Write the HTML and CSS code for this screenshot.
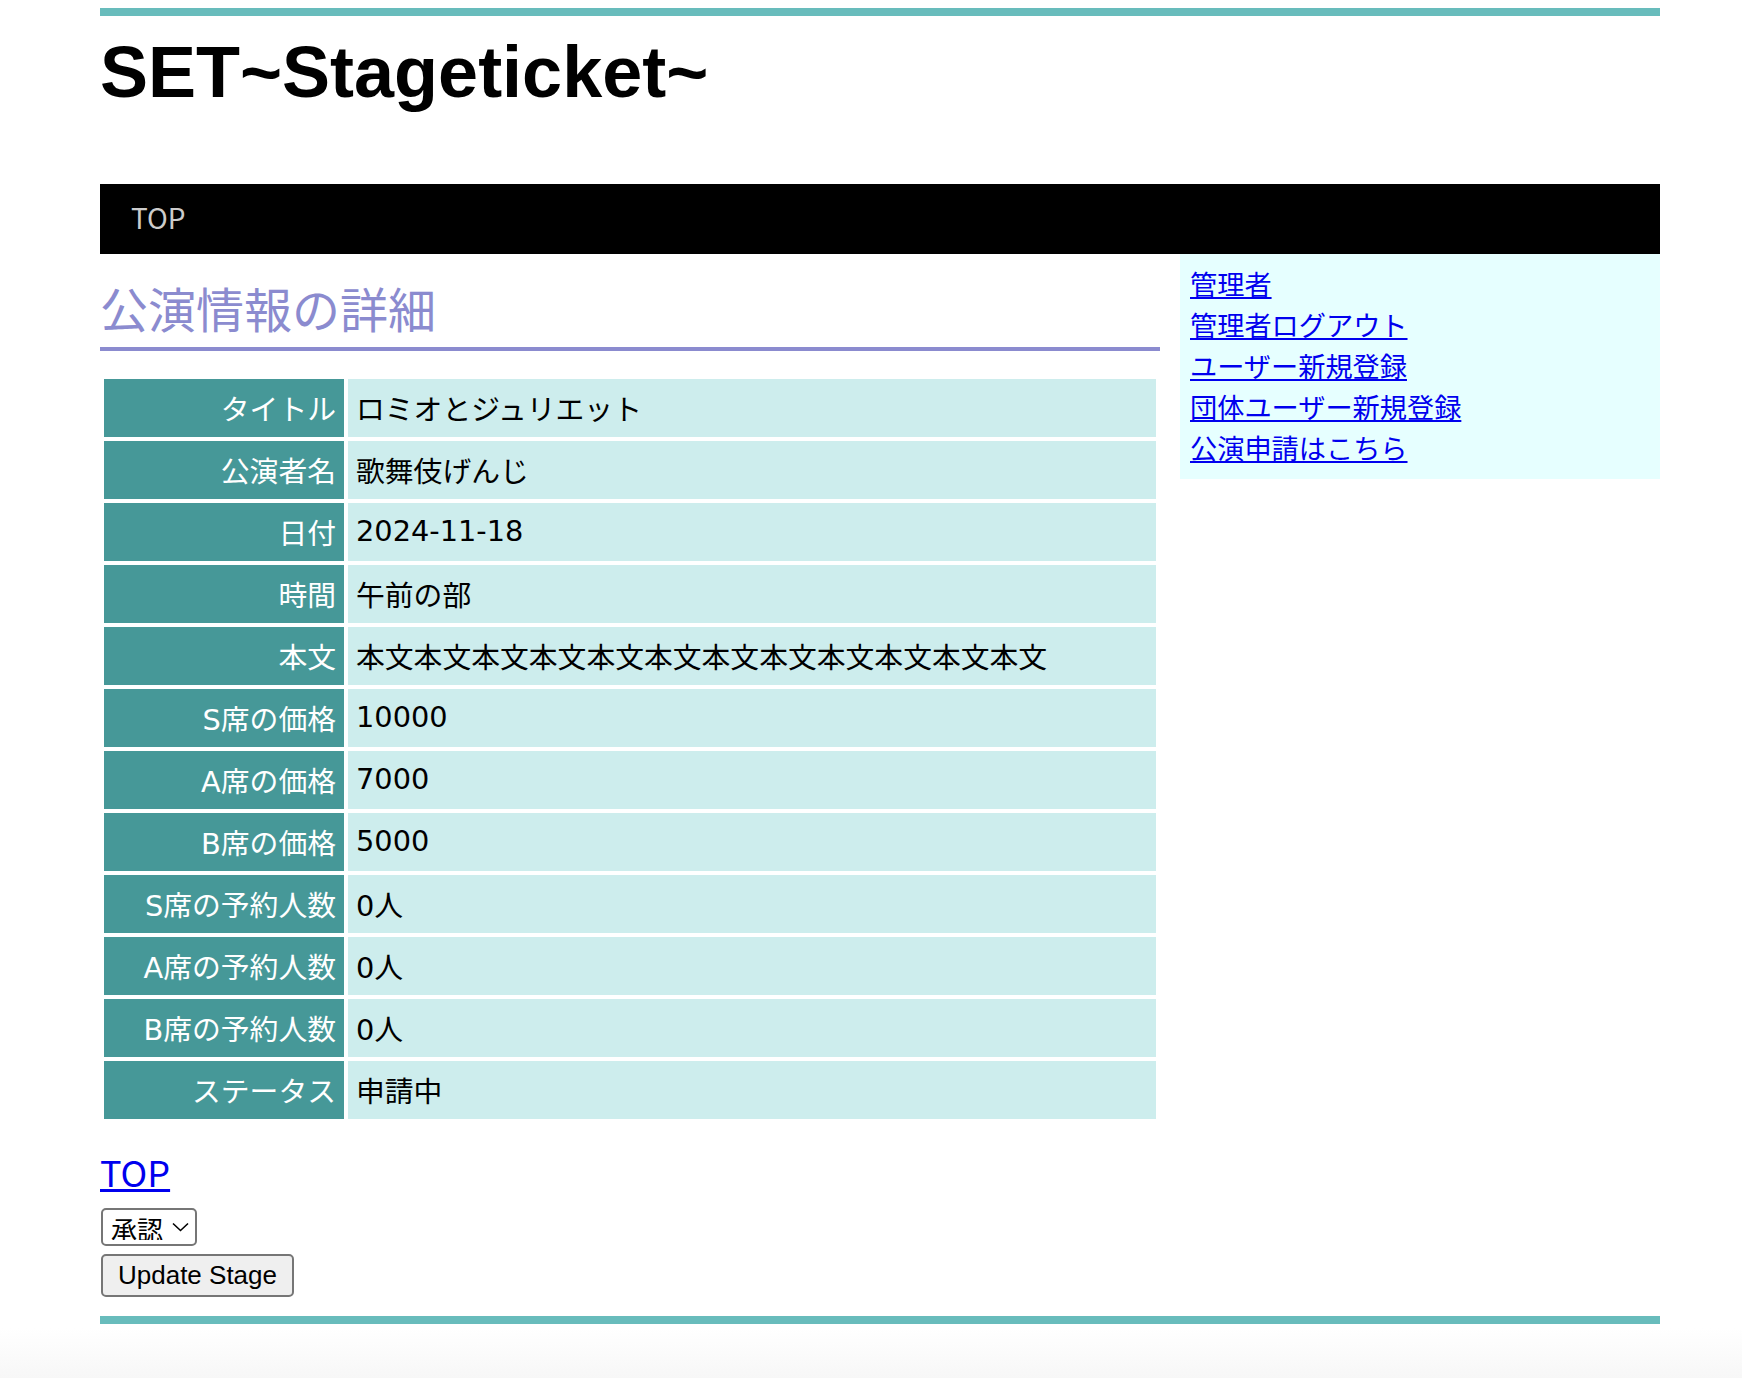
FILE: index.html
```html
<!DOCTYPE html>
<html lang="ja">
<head>
<meta charset="utf-8">
<title>SET~Stageticket~</title>
<link rel="stylesheet" href="styles.css">
</head>
<body>
<div class="wrap">
  <header class="header">
    <h1 class="site-title">SET~Stageticket~</h1>
  </header>
  <nav class="gnav">
    <a class="gnav-link" href="#">TOP</a>
  </nav>
  <div class="columns">
    <main class="main">
      <h2 class="page-title">公演情報の詳細</h2>
      <table class="detail">
        <tr><th>タイトル</th><td>ロミオとジュリエット</td></tr>
        <tr><th>公演者名</th><td>歌舞伎げんじ</td></tr>
        <tr><th>日付</th><td>2024-11-18</td></tr>
        <tr><th>時間</th><td>午前の部</td></tr>
        <tr><th>本文</th><td>本文本文本文本文本文本文本文本文本文本文本文本文</td></tr>
        <tr><th>S席の価格</th><td>10000</td></tr>
        <tr><th>A席の価格</th><td>7000</td></tr>
        <tr><th>B席の価格</th><td>5000</td></tr>
        <tr><th>S席の予約人数</th><td>0人</td></tr>
        <tr><th>A席の予約人数</th><td>0人</td></tr>
        <tr><th>B席の予約人数</th><td>0人</td></tr>
        <tr><th>ステータス</th><td>申請中</td></tr>
      </table>
      <div class="after">
        <a class="top-link" href="#">TOP</a>
        <form class="status-form">
          <span class="select-wrap">
            <select class="status-select">
              <option>承認</option>
              <option>却下</option>
            </select>
            <svg class="chev" width="17" height="10" viewBox="0 0 17 10"><path d="M1 1.5 L8.5 8.5 L16 1.5" fill="none" stroke="#000" stroke-width="1.6"/></svg>
          </span>
          <button class="update-btn" type="button">Update Stage</button>
        </form>
      </div>
    </main>
    <aside class="side">
      <a class="side-link" href="#">管理者</a>
      <a class="side-link" href="#">管理者ログアウト</a>
      <a class="side-link" href="#">ユーザー新規登録</a>
      <a class="side-link" href="#">団体ユーザー新規登録</a>
      <a class="side-link" href="#">公演申請はこちら</a>
    </aside>
  </div>
</div>
</body>
</html>
```

FILE: styles.css
```css
html {
  min-height: 100%;
  background: linear-gradient(to bottom, #ffffff calc(100% - 50px), #f7f7f7 100%);
}
html, body {
  margin: 0;
  padding: 0;
}
body {
  padding: 8px 0 0;
  font-family: "Noto Sans CJK JP", sans-serif;
}
.wrap {
  width: 1560px;
  margin-left: 100px;
  border-top: 8px solid #68bcbc;
  border-bottom: 8px solid #68bcbc;
}
.header {
  height: 168px;
  box-sizing: border-box;
  padding-top: 20px;
}
.site-title {
  margin: 0;
  font-family: "Liberation Sans", Arial, sans-serif;
  font-weight: bold;
  font-size: 72px;
  line-height: 72px;
  color: #000;
}
.gnav {
  background: #000;
  height: 70px;
  padding-left: 31px;
  display: flex;
  align-items: flex-start;
}
.gnav-link {
  color: #cccccc;
  text-decoration: none;
  font-family: "Noto Sans CJK JP", sans-serif;
  font-size: 28px;
  line-height: 66px;
}
.columns {
  display: flex;
  align-items: flex-start;
  gap: 20px;
}
.main {
  width: 1060px;
  flex: none;
}
.page-title {
  margin: 17px 0 24px;
  padding-bottom: 4px;
  border-bottom: 4px solid #8b8bcf;
  color: #8b8bcf;
  font-weight: normal;
  font-size: 48px;
  line-height: 72px;
}
.detail {
  width: 1060px;
  border-spacing: 4px;
  margin: 0;
  font-family: "DejaVu Sans", "Noto Sans CJK JP", sans-serif;
  font-size: 28.8px;
}
.detail th {
  width: 240px;
  box-sizing: border-box;
  height: 58px;
  padding: 0 8px 2px;
  background: #469898;
  color: #ffffff;
  font-weight: normal;
  text-align: right;
  white-space: nowrap;
}
.detail td {
  height: 58px;
  box-sizing: border-box;
  padding: 0 8px 2px;
  background: #cdeded;
  color: #000;
  text-align: left;
}
.after {
  margin-top: 20px;
}
.top-link {
  display: block;
  width: max-content;
  font-size: 36px;
  line-height: 56px;
  color: #0000ee;
}
.status-form {
  margin: 9px 0 0;
  display: flex;
  flex-direction: column;
  align-items: flex-start;
  gap: 8px;
  padding-bottom: 19px;
}
.select-wrap {
  position: relative;
  display: inline-block;
  margin-left: 1px;
}
.status-select {
  appearance: none;
  -webkit-appearance: none;
  display: block;
  width: 96px;
  height: 38px;
  box-sizing: border-box;
  border: 2px solid #767676;
  border-radius: 5px;
  background: #ffffff;
  padding: 0 0 4px 8px;
  font-family: "Noto Sans CJK JP", sans-serif;
  font-size: 26px;
  color: #000;
}
.chev {
  position: absolute;
  right: 8px;
  top: 14px;
  pointer-events: none;
}
.update-btn {
  margin-left: 1px;
  width: 193px;
  height: 43px;
  box-sizing: border-box;
  border: 2px solid #767676;
  border-radius: 5px;
  background: #efefef;
  font-family: "Liberation Sans", Arial, sans-serif;
  font-size: 26px;
  color: #000;
  padding: 0;
}
.side {
  width: 480px;
  flex: none;
  box-sizing: border-box;
  background: #e6ffff;
  padding: 9px 10px 11px;
  display: flex;
  flex-direction: column;
  align-items: flex-start;
}
.side-link {
  font-size: 27.2px;
  line-height: 41px;
  color: #0000ee;
}
```
